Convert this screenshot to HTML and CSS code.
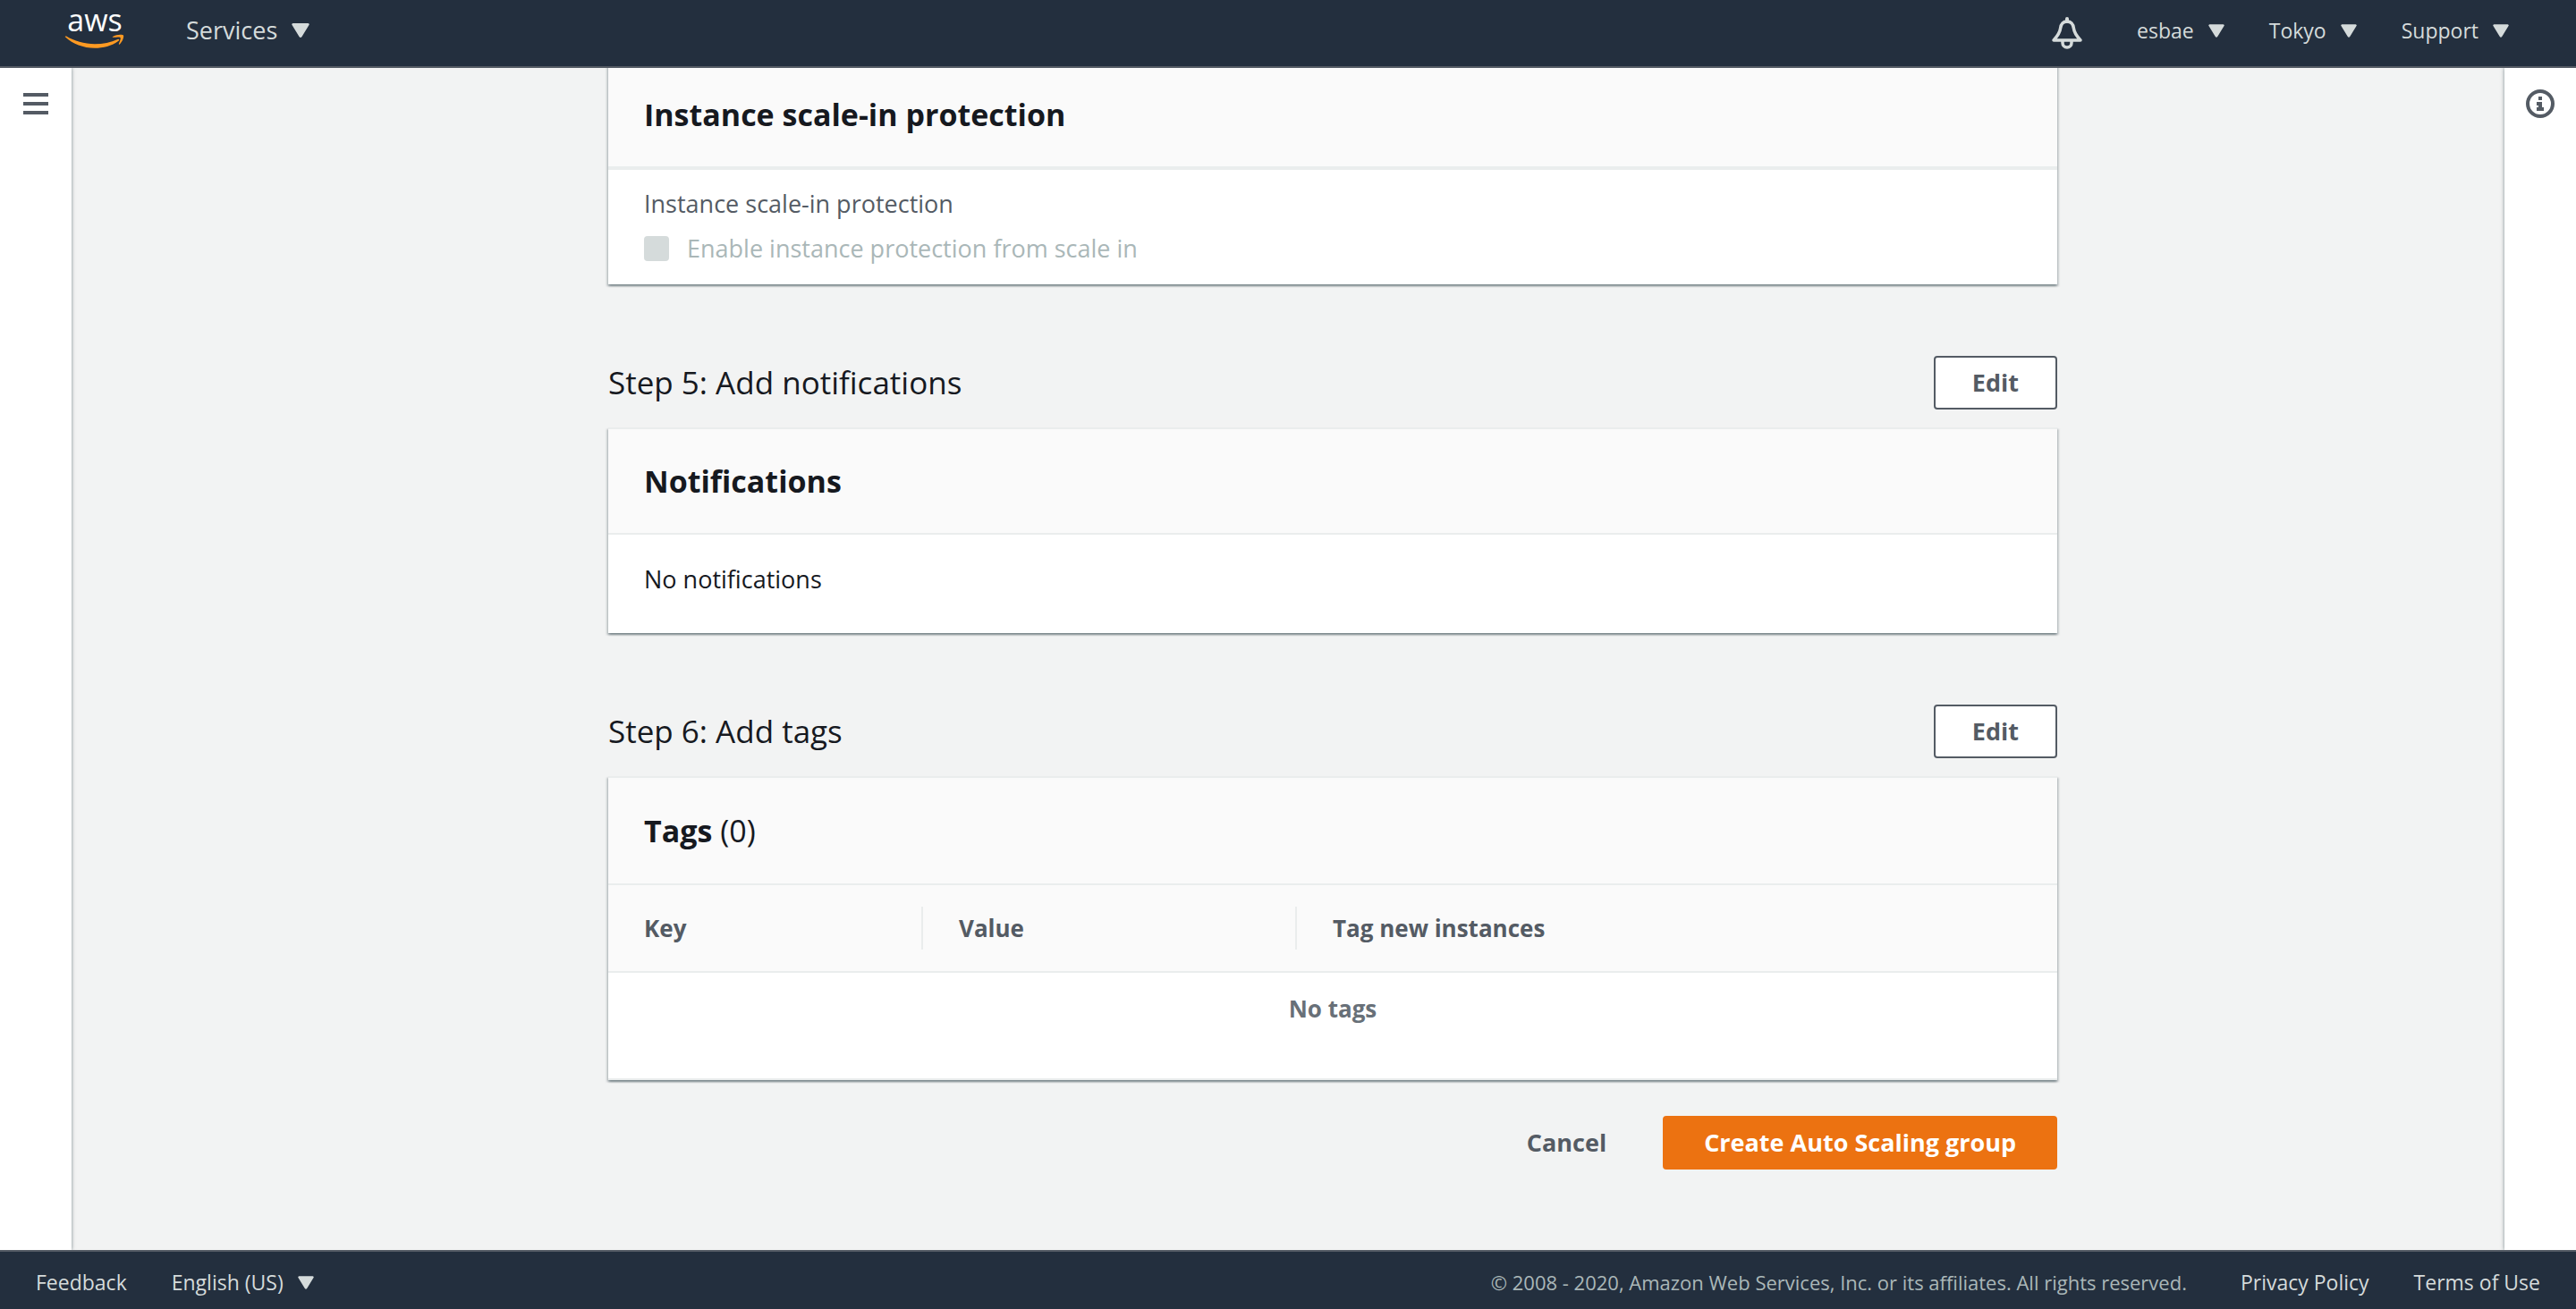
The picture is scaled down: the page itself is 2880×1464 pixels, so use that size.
FILE: index.html
```html
<!DOCTYPE html>
<html lang="en">
<head>
<meta charset="utf-8">
<meta name="viewport" content="width=device-width, initial-scale=1">
<title>Create Auto Scaling group</title>
<link rel="stylesheet" href="styles.css">
</head>
<body>
<header class="topbar">
  <a class="logo" href="#" aria-label="AWS home">
    <svg width="68" height="64" viewBox="0 -10 68 64" aria-hidden="true">
      <text class="logo-text" x="34" y="23" text-anchor="middle">aws</text>
      <path fill="#ff9a22" d="M1.200 29.600C.2 29 1 28 2.200 28.600C11 34 22 37.200 34 37.200C43 37.200 52 35.300 59.500 31.900C61 31.300 62 32.700 60.500 33.700C53 39.300 43 41.800 34 41.800C21 41.800 9.500 37.300 1.200 29.600Z"/>
      <path fill="#ff9a22" d="M54 29C58 26.200 65.500 26.300 66 27.500C66.800 29 65 34.500 61.800 37.400C61.100 38 60.500 37.600 60.900 36.800C62 34.200 63.300 31 62.500 30C61.700 29 57.500 29.500 54.600 29.800C53.800 29.900 53.500 29.400 54 29Z"/>
    </svg>
  </a>
  <button class="menu menu-services" type="button">Services
    <svg class="caret-lg" viewBox="0 0 20 16" aria-hidden="true"><path d="M1.500 0H18.500Q20.500 .5 19.300 2.300L11.500 15Q10 17 8.500 15L.7 2.300Q-.5 .5 1.500 0Z"/></svg>
  </button>
  <nav class="account" aria-label="Account">
    <button class="bell" type="button" aria-label="Notifications">
      <svg width="36" height="36" viewBox="0 0 36 36" fill="none" stroke="currentColor" aria-hidden="true">
        <path d="M18 2V5" stroke-width="4" stroke-linecap="round"/>
        <path d="M18 5C12.500 5 11 9 10.500 13C10 17.500 8.500 20 3 26H33C27.500 20 26 17.500 25.500 13C25 9 23.500 5 18 5Z" stroke-width="3.500" stroke-linejoin="round"/>
        <path d="M13 27V29A5 5 0 0 0 23 29V27" stroke-width="3.500"/>
      </svg>
    </button>
    <button class="menu" type="button">esbae <svg class="caret" viewBox="0 0 20 16" aria-hidden="true"><path d="M1.500 0H18.500Q20.500 .5 19.300 2.300L11.500 15Q10 17 8.500 15L.7 2.300Q-.5 .5 1.500 0Z"/></svg></button>
    <button class="menu" type="button">Tokyo <svg class="caret" viewBox="0 0 20 16" aria-hidden="true"><path d="M1.500 0H18.500Q20.500 .5 19.300 2.300L11.500 15Q10 17 8.500 15L.7 2.300Q-.5 .5 1.500 0Z"/></svg></button>
    <button class="menu" type="button">Support <svg class="caret" viewBox="0 0 20 16" aria-hidden="true"><path d="M1.500 0H18.500Q20.500 .5 19.300 2.300L11.500 15Q10 17 8.500 15L.7 2.300Q-.5 .5 1.500 0Z"/></svg></button>
  </nav>
</header>

<div class="workspace">
  <aside class="rail rail-left">
    <button class="rail-button" type="button" aria-label="Open navigation">
      <svg width="32" height="32" viewBox="0 0 32 32" fill="currentColor" aria-hidden="true"><path d="M2 4h28v4H2zM2 14h28v4H2zM2 24h28v4H2z"/></svg>
    </button>
  </aside>

  <main class="content">
    <div class="steps">
      <section class="card card-scrolled">
        <div class="card-header"><h2>Instance scale-in protection</h2></div>
        <div class="field">
          <div class="field-label">Instance scale-in protection</div>
          <label class="check"><input type="checkbox" disabled>Enable instance protection from scale in</label>
        </div>
      </section>

      <section class="step">
        <div class="step-header"><h1>Step 5: Add notifications</h1><button class="button" type="button">Edit</button></div>
        <div class="card">
          <div class="card-header"><h2>Notifications</h2></div>
          <p class="card-text">No notifications</p>
        </div>
      </section>

      <section class="step">
        <div class="step-header"><h1>Step 6: Add tags</h1><button class="button" type="button">Edit</button></div>
        <div class="card">
          <div class="card-header card-header-table"><h2>Tags <span class="count">(0)</span></h2></div>
          <table class="tags">
            <colgroup><col class="col-key"><col class="col-value"><col></colgroup>
            <thead><tr><th scope="col"><div>Key</div></th><th scope="col"><div>Value</div></th><th scope="col"><div>Tag new instances</div></th></tr></thead>
            <tbody><tr><td colspan="3">No tags</td></tr></tbody>
          </table>
        </div>
      </section>

      <div class="actions">
        <button class="button button-link" type="button">Cancel</button>
        <button class="button button-primary" type="button">Create Auto Scaling group</button>
      </div>
    </div>
  </main>

  <aside class="rail rail-right">
    <button class="rail-button" type="button" aria-label="Open help panel">
      <svg width="32" height="32" viewBox="0 0 32 32" fill="currentColor" aria-hidden="true"><circle cx="16" cy="16" r="14" fill="none" stroke="currentColor" stroke-width="4"/><path d="M14 8h4v4h-4zM12 14h6v6h2v4h-8v-4h2v-2h-2z"/></svg>
    </button>
  </aside>
</div>

<footer class="footer">
  <a href="#">Feedback</a>
  <button class="menu" type="button">English (US) <svg class="caret" viewBox="0 0 20 16" aria-hidden="true"><path d="M1.500 0H18.500Q20.500 .5 19.300 2.300L11.500 15Q10 17 8.500 15L.7 2.300Q-.5 .5 1.500 0Z"/></svg></button>
  <small class="copyright">© 2008 - 2020, Amazon Web Services, Inc. or its affiliates. All rights reserved.</small>
  <a href="#">Privacy Policy</a>
  <a href="#">Terms of Use</a>
</footer>
</body>
</html>
```
FILE: styles.css
```css
* {
  box-sizing: border-box;
}

body {
  margin: 0;
  min-height: 100vh;
  display: flex;
  flex-direction: column;
  background: #f2f3f3;
  color: #16191f;
  font-family: "Open Sans", "Noto Sans", sans-serif;
  font-size: 27px;
  line-height: 40px;
}

h1,
h2,
p {
  margin: 0;
}

button {
  margin: 0;
  padding: 0;
  border: 0;
  background: none;
  color: inherit;
  font: inherit;
  cursor: pointer;
}

svg {
  display: block;
}

/* Top bar */
.topbar {
  display: flex;
  align-items: center;
  height: 76px;
  padding: 0 75px 6px 72px;
  border-bottom: 2px solid #545b64;
  background: #232f3e;
  color: #d5dbdb;
}

.logo {
  margin-right: 68px;
}

.logo-text {
  fill: #fff;
  font-size: 34px;
}

.menu {
  display: flex;
  align-items: center;
  gap: 16px;
  font-size: 23px;
}

.menu-services {
  font-size: 27px;
}

.caret {
  width: 18px;
  height: 15px;
  fill: currentColor;
}

.caret-lg {
  width: 20px;
  height: 16px;
  fill: currentColor;
}

.account {
  display: flex;
  align-items: center;
  gap: 50px;
  margin-left: auto;
}

.bell {
  margin: 6px 10px 0 0;
}

/* Side rails and scrolling area */
.workspace {
  flex: 1;
  display: flex;
  overflow: hidden;
}

.rail {
  flex: 0 0 80px;
  padding-top: 24px;
  background: #fff;
  box-shadow: 0 0 4px rgba(0, 28, 36, 0.5);
}

.rail-button {
  display: block;
  margin: 0 auto;
  color: #545b64;
}

.content {
  flex: 1;
  display: flex;
  justify-content: center;
  padding: 0 0 90px 100px;
}

.steps {
  flex: 0 1 1620px;
}

/* Cards */
.card {
  border-top: 2px solid #eaeded;
  background: #fff;
  box-shadow: 0 2px 2px rgba(0, 28, 36, 0.3), 2px 2px 2px rgba(0, 28, 36, 0.15), -2px 2px 2px rgba(0, 28, 36, 0.15);
}

.card-scrolled {
  margin-top: -8px;
}

.card-header {
  padding: 36px 40px;
  border-bottom: 2px solid #eaeded;
  background: #fafafa;
}

.card-header-table {
  padding: 37px 40px;
}

h1,
h2 {
  font-size: 35px;
  line-height: 44px;
}

h1,
.count {
  font-weight: 400;
}

h2 {
  font-size: 34px;
  font-weight: 700;
}

.field {
  display: flex;
  flex-direction: column;
  gap: 10px;
  padding: 18px 40px 20px;
  border-top: 2px solid #eaeded;
}

.field-label {
  color: #545b64;
}

.check {
  display: flex;
  align-items: center;
  gap: 20px;
  color: #aab7b8;
}

.check input {
  appearance: none;
  width: 28px;
  height: 28px;
  margin: 0;
  border-radius: 4px;
  background: #d5dbdb;
}

.card-text {
  padding: 30px 40px 40px;
}

/* Steps */
.step {
  margin-top: 80px;
}

.step-header {
  display: flex;
  align-items: center;
  justify-content: space-between;
  margin-bottom: 20px;
}

.button {
  height: 60px;
  padding: 0 41px;
  border: 2px solid #545b64;
  border-radius: 4px;
  background: #fff;
  color: #545b64;
  font-weight: 700;
}

.button-link {
  border-color: transparent;
  background: transparent;
}

.button-primary {
  padding: 0 44px;
  border-color: #ec7211;
  background: #ec7211;
  color: #fff;
}

.actions {
  display: flex;
  justify-content: flex-end;
  gap: 20px;
  margin-top: 40px;
}

/* Tags table */
.tags {
  width: 100%;
  border-collapse: separate;
  border-spacing: 0;
  table-layout: fixed;
  font-size: 26px;
  font-weight: 700;
}

.col-key {
  width: 352px;
}

.col-value {
  width: 418px;
}

.tags th {
  padding: 24px 0;
  border-bottom: 2px solid #eaeded;
  background: #fafafa;
  color: #545b64;
  line-height: 48px;
  text-align: left;
}

.tags th div {
  padding-left: 40px;
  border-right: 2px solid #eaeded;
}

.tags th:last-child div {
  border-right: 0;
}

.tags td {
  padding: 20px 40px 58px;
  border-bottom: 2px solid #eaeded;
  color: #687078;
  text-align: center;
}

/* Footer */
.footer {
  display: flex;
  align-items: center;
  gap: 50px;
  height: 66px;
  padding: 4px 40px 0;
  border-top: 2px solid #545b64;
  background: #232f3e;
  color: #d5dbdb;
  font-size: 23px;
}

.footer a {
  color: inherit;
  text-decoration: none;
}

.copyright {
  margin: 0 10px 0 auto;
  color: #aab7b8;
  font-size: 22px;
}
```
